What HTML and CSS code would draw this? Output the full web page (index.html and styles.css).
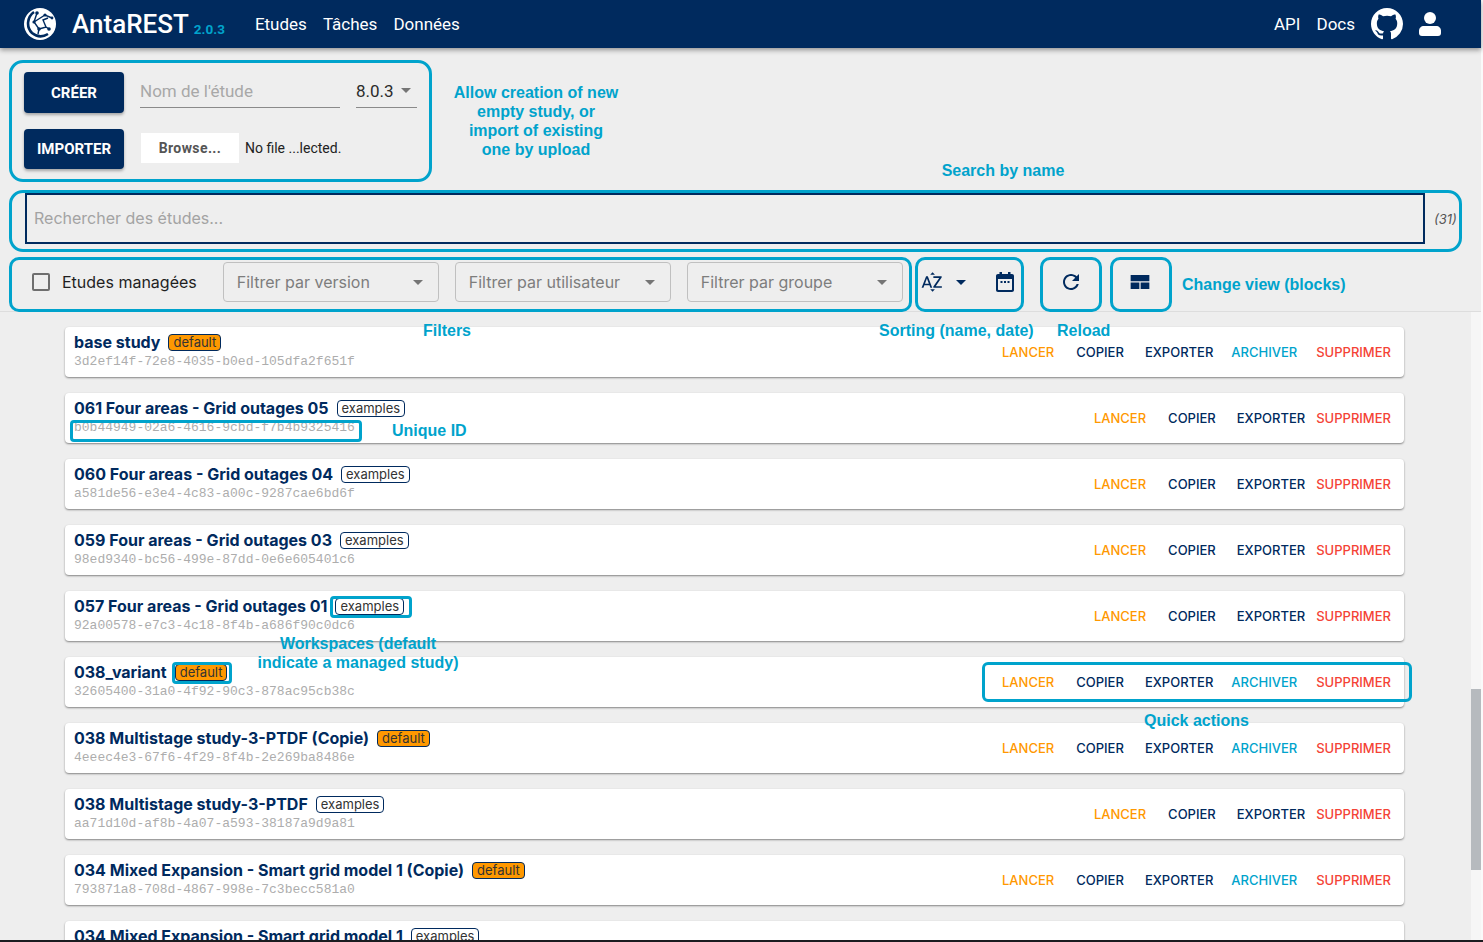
FILE: index.html
```html
<!DOCTYPE html>
<html lang="fr">
<head>
  <meta charset="UTF-8">
  <meta name="viewport" content="width=device-width, initial-scale=1.0">
  <title>AntaREST</title>
  <link rel="stylesheet" href="styles.css">
</head>
<body>
  <div class="app">
    <header class="topbar">
      <svg class="logo" viewBox="0 0 32 32">
        <circle cx="16" cy="16" r="16" fill="#fff"/>
        <g fill="none" stroke="#002a5e">
          <path d="M10 4C3 9 2 19 8 25c5 4 11 4 16 1" stroke-width="2.6"/>
          <path d="M13 5l-3 9 5 7M10 14L21 7l7 3M15 21l7-2 3 2M22 19l-3-7 5-2M15 21l-1 5" stroke-width="1.4"/>
        </g>
        <g fill="#002a5e">
          <circle cx="13" cy="5" r="1.8"/><circle cx="10" cy="14" r="1.6"/><circle cx="21" cy="7" r="1.6"/>
          <circle cx="15" cy="21" r="1.8"/><circle cx="25" cy="21" r="1.8"/><circle cx="28" cy="10" r="1.4"/>
        </g>
      </svg>
      <span class="brand">AntaREST</span>
      <span class="version">2.0.3</span>
      <nav class="nav">
        <a>Etudes</a>
        <a>Tâches</a>
        <a>Données</a>
      </nav>
      <div class="nav nav-right">
        <a>API</a>
        <a>Docs</a>
      </div>
      <svg class="github" viewBox="0 0 16 16"><path fill="#fff" d="M8 0C3.58 0 0 3.58 0 8c0 3.54 2.29 6.53 5.47 7.59.4.07.55-.17.55-.38 0-.19-.01-.82-.01-1.49-2.01.37-2.53-.49-2.69-.94-.09-.23-.48-.94-.82-1.13-.28-.15-.68-.52-.01-.53.63-.01 1.08.58 1.23.82.72 1.21 1.87.87 2.33.66.07-.52.28-.87.51-1.07-1.78-.2-3.64-.89-3.64-3.95 0-.87.31-1.59.82-2.15-.08-.2-.36-1.02.08-2.12 0 0 .67-.21 2.2.82.64-.18 1.32-.27 2-.27.68 0 1.36.09 2 .27 1.53-1.04 2.2-.82 2.2-.82.44 1.1.16 1.92.08 2.12.51.56.82 1.27.82 2.15 0 3.07-1.87 3.75-3.65 3.95.29.25.54.73.54 1.48 0 1.07-.01 1.93-.01 2.2 0 .21.15.46.55.38A8.013 8.013 0 0016 8c0-4.42-3.58-8-8-8z"/></svg>
      <svg class="user" viewBox="0 0 22 24"><circle cx="11" cy="6" r="6" fill="#fff"/><path fill="#fff" d="M5 14h12c3 0 5 2 5 5v2c0 2-1 3-3 3H3c-2 0-3-1-3-3v-2c0-3 2-5 5-5z"/></svg>
    </header>

    <section class="controls">
      <div class="create-grid">
        <button class="main-btn btn-create">CRÉER</button>
        <div class="name-row">
          <div class="name-input">Nom de l'étude</div>
          <div class="version-select">8.0.3<span class="caret"></span></div>
        </div>
        <button class="main-btn btn-import">IMPORTER</button>
        <div class="file-row">
          <span class="browse">Browse...</span>
          <span class="file-name">No file ...lected.</span>
        </div>
      </div>

      <div class="search-row">
        <div class="search">Rechercher des études...</div>
        <span class="count">(31)</span>
      </div>

      <div class="filter-row">
        <span class="checkbox"></span>
        <span class="managed">Etudes managées</span>
        <div class="select select-first">Filtrer par version<span class="caret"></span></div>
        <div class="select">Filtrer par utilisateur<span class="caret"></span></div>
        <div class="select">Filtrer par groupe<span class="caret"></span></div>
        <svg class="icon icon-az" viewBox="0 0 24 24"><path d="M14.94 4.66h-4.72l2.36-2.36zm-4.69 14.71h4.66l-2.33 2.33zM6.1 6.27 1.6 17.73h1.84l.92-2.45h5.11l.92 2.45h1.84L7.83 6.27H6.1zm-1.13 7.37 1.94-5.18 1.94 5.18H4.97zm10.76 2.5h6.12v1.59h-8.53v-1.29l5.92-8.56h-5.88v-1.6h8.3v1.26l-5.93 8.6z"/></svg>
        <span class="caret caret-dark"></span>
        <svg class="icon icon-cal" viewBox="0 0 24 24"><path d="M6.500 2H9v2h6V2h2.500v2H19c1.200 0 2 .800 2 2v14c0 1.200-.800 2-2 2H5c-1.200 0-2-.800-2-2V6c0-1.200.800-2 2-2h1.500V2zM5 9v10.500c0 .300.200.500.500.500h13c.300 0 .500-.200.500-.500V9H5z"/><rect x="7.500" y="11" width="2" height="2"/><rect x="11" y="11" width="2" height="2"/><rect x="14.500" y="11" width="2" height="2"/></svg>
        <svg class="icon icon-refresh" viewBox="0 0 24 24"><path d="M17.65 6.35C16.2 4.9 14.21 4 12 4c-4.42 0-7.99 3.58-7.99 8s3.57 8 7.99 8c3.73 0 6.84-2.55 7.73-6h-2.08c-.82 2.33-3.04 4-5.65 4-3.31 0-6-2.69-6-6s2.69-6 6-6c1.66 0 3.14.69 4.22 1.78L13 11h7V4l-2.35 2.35z"/></svg>
        <svg class="icon icon-view" viewBox="0 0 24 24"><path d="M2.650 5h18.700v6.200H2.650zM2.650 12.400h8.700V19h-8.700zM12.650 12.400h8.700V19h-8.700z"/></svg>
      </div>
    </section>

    <div class="list-area">
      <main class="list">
        <article class="card">
          <div class="card-info">
            <div class="card-title"><span class="card-name">base study</span><span class="tag tag-default">default</span></div>
            <div class="card-id">3d2ef14f-72e8-4035-b0ed-105dfa2f651f</div>
          </div>
          <div class="actions">
            <a class="lancer">LANCER</a><a class="copier">COPIER</a><a class="exporter">EXPORTER</a><a class="archiver">ARCHIVER</a><a class="supprimer">SUPPRIMER</a>
          </div>
        </article>
        <article class="card">
          <div class="card-info">
            <div class="card-title"><span class="card-name">061 Four areas - Grid outages 05</span><span class="tag">examples</span></div>
            <div class="card-id">b0b44949-02a6-4616-9cbd-f7b4b9325416</div>
          </div>
          <div class="actions">
            <a class="lancer">LANCER</a><a class="copier">COPIER</a><a class="exporter">EXPORTER</a><a class="supprimer">SUPPRIMER</a>
          </div>
        </article>
        <article class="card">
          <div class="card-info">
            <div class="card-title"><span class="card-name">060 Four areas - Grid outages 04</span><span class="tag">examples</span></div>
            <div class="card-id">a581de56-e3e4-4c83-a00c-9287cae6bd6f</div>
          </div>
          <div class="actions">
            <a class="lancer">LANCER</a><a class="copier">COPIER</a><a class="exporter">EXPORTER</a><a class="supprimer">SUPPRIMER</a>
          </div>
        </article>
        <article class="card">
          <div class="card-info">
            <div class="card-title"><span class="card-name">059 Four areas - Grid outages 03</span><span class="tag">examples</span></div>
            <div class="card-id">98ed9340-bc56-499e-87dd-0e6e605401c6</div>
          </div>
          <div class="actions">
            <a class="lancer">LANCER</a><a class="copier">COPIER</a><a class="exporter">EXPORTER</a><a class="supprimer">SUPPRIMER</a>
          </div>
        </article>
        <article class="card">
          <div class="card-info">
            <div class="card-title"><span class="card-name">057 Four areas - Grid outages 01</span><span class="tag">examples</span></div>
            <div class="card-id">92a00578-e7c3-4c18-8f4b-a686f90c0dc6</div>
          </div>
          <div class="actions">
            <a class="lancer">LANCER</a><a class="copier">COPIER</a><a class="exporter">EXPORTER</a><a class="supprimer">SUPPRIMER</a>
          </div>
        </article>
        <article class="card">
          <div class="card-info">
            <div class="card-title"><span class="card-name">038_variant</span><span class="tag tag-default">default</span></div>
            <div class="card-id">32605400-31a0-4f92-90c3-878ac95cb38c</div>
          </div>
          <div class="actions">
            <a class="lancer">LANCER</a><a class="copier">COPIER</a><a class="exporter">EXPORTER</a><a class="archiver">ARCHIVER</a><a class="supprimer">SUPPRIMER</a>
          </div>
        </article>
        <article class="card">
          <div class="card-info">
            <div class="card-title"><span class="card-name">038 Multistage study-3-PTDF (Copie)</span><span class="tag tag-default">default</span></div>
            <div class="card-id">4eeec4e3-67f6-4f29-8f4b-2e269ba8486e</div>
          </div>
          <div class="actions">
            <a class="lancer">LANCER</a><a class="copier">COPIER</a><a class="exporter">EXPORTER</a><a class="archiver">ARCHIVER</a><a class="supprimer">SUPPRIMER</a>
          </div>
        </article>
        <article class="card">
          <div class="card-info">
            <div class="card-title"><span class="card-name">038 Multistage study-3-PTDF</span><span class="tag">examples</span></div>
            <div class="card-id">aa71d10d-af8b-4a07-a593-38187a9d9a81</div>
          </div>
          <div class="actions">
            <a class="lancer">LANCER</a><a class="copier">COPIER</a><a class="exporter">EXPORTER</a><a class="supprimer">SUPPRIMER</a>
          </div>
        </article>
        <article class="card">
          <div class="card-info">
            <div class="card-title"><span class="card-name">034 Mixed Expansion - Smart grid model 1 (Copie)</span><span class="tag tag-default">default</span></div>
            <div class="card-id">793871a8-708d-4867-998e-7c3becc581a0</div>
          </div>
          <div class="actions">
            <a class="lancer">LANCER</a><a class="copier">COPIER</a><a class="exporter">EXPORTER</a><a class="archiver">ARCHIVER</a><a class="supprimer">SUPPRIMER</a>
          </div>
        </article>
        <article class="card">
          <div class="card-info">
            <div class="card-title"><span class="card-name">034 Mixed Expansion - Smart grid model 1</span><span class="tag">examples</span></div>
          </div>
        </article>
      </main>
      <div class="scrollbar"><div class="thumb"></div></div>
    </div>
  </div>
  <div class="bottom-edge"></div>

  <!-- annotations drawn over the screenshot -->
  <div class="mark mark-create"></div>
  <div class="mark mark-search"></div>
  <div class="mark mark-filters"></div>
  <div class="mark mark-sort"></div>
  <div class="mark mark-reload"></div>
  <div class="mark mark-view"></div>
  <div class="mark mark-id"></div>
  <div class="mark mark-workspace"></div>
  <div class="mark mark-default"></div>
  <div class="mark mark-quick"></div>

  <div class="note note-allow">Allow creation of new<br>empty study, or<br>import of existing<br>one by upload</div>
  <div class="note note-search">Search by name</div>
  <div class="note note-change">Change view (blocks)</div>
  <div class="note note-filters">Filters</div>
  <div class="note note-sorting">Sorting (name, date)</div>
  <div class="note note-reload">Reload</div>
  <div class="note note-unique">Unique ID</div>
  <div class="note note-workspaces">Workspaces (default<br>indicate a managed study)</div>
  <div class="note note-quick">Quick actions</div>
</body>
</html>
```

FILE: styles.css
```css
* {
  box-sizing: border-box;
}
html, body {
  height: 100%;
}
body {
  margin: 0;
  position: relative;
  overflow: hidden;
  background-color: #fafafa;
  font-family: "Inter", sans-serif;
  color: #002a5e;
}
.app {
  width: 1481px;
  height: 940px;
  display: flex;
  flex-direction: column;
  background-color: #eeeeee;
}
.bottom-edge {
  height: 2px;
  background-color: #1b1b1f;
}

/* top bar */
.topbar {
  height: 48px;
  flex: none;
  display: flex;
  align-items: center;
  padding-left: 24px;
  background-color: #002a5e;
  box-shadow: 0 2px 5px rgba(0, 0, 0, 0.4);
  position: relative;
  color: #fff;
  font-family: "Roboto", sans-serif;
}
.logo {
  width: 32px;
  height: 32px;
}
.brand {
  margin-left: 16px;
  font-size: 26px;
  font-weight: 500;
}
.version {
  margin-left: 5px;
  margin-top: 9px;
  font-size: 13.5px;
  font-weight: 700;
  color: #00a3cc;
}
.nav {
  display: flex;
  gap: 16px;
  margin-left: 30px;
  font-size: 17px;
}
.nav-right {
  margin-left: auto;
}
.github {
  width: 32px;
  height: 32px;
  margin-left: 16px;
}
.user {
  width: 22px;
  height: 24px;
  margin: 0 40px 0 16px;
}

/* create, search and filter */
.controls {
  flex: none;
  height: 264px;
  padding: 24px 0 0 24px;
  border-bottom: 1px solid #dddddd;
}
.create-grid {
  display: grid;
  grid-template-columns: 100px 277px;
  grid-template-rows: 41px 40px;
  column-gap: 16px;
  row-gap: 16px;
}
.main-btn {
  border: none;
  border-radius: 4px;
  background-color: #002a5e;
  color: #fff;
  font-family: "Roboto", sans-serif;
  font-size: 15px;
  font-weight: 700;
  box-shadow: 0 2px 3px rgba(0, 0, 0, 0.3);
}
.name-row {
  display: flex;
  gap: 16px;
}
.name-input {
  width: 200px;
  height: 36px;
  line-height: 38px;
  border-bottom: 1px solid #8a8a8a;
  color: #a8a8a8;
  font-family: "Roboto", sans-serif;
  font-size: 17px;
}
.version-select {
  width: 61px;
  height: 36px;
  padding: 2px 6px 0 0;
  border-bottom: 1px solid #8a8a8a;
  color: #2b2b2b;
  font-family: "Roboto", sans-serif;
  font-size: 17px;
  display: flex;
  align-items: center;
  justify-content: space-between;
}
.caret {
  width: 0;
  height: 0;
  border-left: 5px solid transparent;
  border-right: 5px solid transparent;
  border-top: 5px solid #757575;
}
.file-row {
  display: flex;
  align-items: center;
  padding: 0 0 2px 1px;
  font-family: "Roboto", sans-serif;
}
.browse {
  width: 98px;
  height: 30px;
  line-height: 30px;
  text-align: center;
  background-color: #fff;
  color: #555555;
  font-size: 14px;
  font-weight: 700;
  letter-spacing: 0.4px;
}
.file-name {
  margin-left: 6px;
  font-size: 14px;
  color: #222222;
}
.search-row {
  display: flex;
  align-items: center;
  margin-top: 24px;
  height: 51px;
}
.search {
  width: 1400px;
  margin-left: 1px;
  height: 51px;
  line-height: 47px;
  padding-left: 7px;
  border: 2px solid #002a5e;
  color: #a3a3a3;
  font-size: 16px;
}
.count {
  margin-left: 9px;
  font-size: 13px;
  font-style: italic;
  color: #555555;
}
.filter-row {
  display: flex;
  align-items: center;
  margin-top: 18px;
  height: 40px;
  padding-left: 8px;
}
.checkbox {
  width: 18px;
  height: 18px;
  border: 2px solid #6e6e6e;
  border-radius: 2px;
}
.managed {
  margin-left: 12px;
  font-size: 16px;
  color: #1f1f1f;
}
.select {
  width: 216px;
  height: 40px;
  margin-left: 16px;
  padding: 0 15px 0 13px;
  display: flex;
  align-items: center;
  justify-content: space-between;
  border: 1px solid #c0c0c0;
  border-radius: 4px;
  color: #7d7d7d;
  font-size: 16px;
}
.select-first {
  margin-left: 26px;
}
.icon {
  width: 24px;
  height: 24px;
  fill: #002a5e;
  flex: none;
}
.icon-az {
  margin-left: 17px;
}
.caret-dark {
  margin-left: 12px;
  border-top-color: #002a5e;
}
.icon-cal {
  margin-left: 27px;
}
.icon-refresh {
  margin-left: 42px;
}
.icon-view {
  margin-left: 45px;
}

/* study list */
.list-area {
  flex: 1;
  min-height: 0;
  display: flex;
  overflow: hidden;
}
.list {
  flex: 1;
  padding: 15px 67px 0 65px;
  display: flex;
  flex-direction: column;
  gap: 16px;
}
.card {
  flex: none;
  height: 50px;
  padding: 0 13px 0 9px;
  display: flex;
  justify-content: space-between;
  align-items: center;
  background-color: #fff;
  border-radius: 4px;
  box-shadow: 0 1px 2px rgba(0, 0, 0, 0.45);
}
.card-info {
  align-self: flex-start;
  padding-top: 6px;
}
.card-title {
  display: flex;
  align-items: center;
  gap: 8px;
  height: 19px;
  font-size: 16px;
  font-weight: 700;
}
.card-name {
  padding-bottom: 2px;
}
.tag {
  height: 17px;
  line-height: 15px;
  padding: 0 4px;
  border: 1px solid #002a5e;
  border-radius: 4px;
  font-size: 13px;
  font-weight: 400;
  color: #333333;
}
.tag-default {
  background-color: #ff9800;
}
.card-id {
  margin-top: 2px;
  height: 16px;
  line-height: 16px;
  font-family: "Liberation Mono", monospace;
  font-size: 13px;
  color: #adadad;
}
.actions {
  display: flex;
  font-size: 13px;
  font-weight: 500;
}
.lancer {
  margin-right: 22px;
  color: #ff9800;
}
.copier {
  margin-right: 21px;
}
.exporter {
  margin-right: 11px;
}
.archiver {
  margin: 0 19px 0 7px;
  color: #00a3cc;
}
.supprimer {
  color: #f44336;
}
.scrollbar {
  width: 10px;
  flex: none;
  background-color: #f6f6f6;
}
.thumb {
  height: 181px;
  margin-top: 377px;
  background-color: #b6babe;
}

/* annotation frames and labels */
.mark {
  position: absolute;
  border: 3px solid #00a3cc;
  border-radius: 14px;
}
.mark-create { left: 9px; top: 60px; width: 423px; height: 122px; }
.mark-search { left: 9px; top: 190px; width: 1453px; height: 62px; }
.mark-filters { left: 9px; top: 257px; width: 903px; height: 55px; border-radius: 10px; }
.mark-sort { left: 915px; top: 257px; width: 109px; height: 55px; border-radius: 10px; }
.mark-reload { left: 1040px; top: 257px; width: 62px; height: 55px; border-radius: 10px; }
.mark-view { left: 1110px; top: 257px; width: 62px; height: 55px; border-radius: 10px; }
.mark-id { left: 70px; top: 420px; width: 292px; height: 22px; border-radius: 4px; }
.mark-workspace { left: 330px; top: 596px; width: 82px; height: 22px; border-radius: 4px; }
.mark-default { left: 172px; top: 662px; width: 60px; height: 22px; border-radius: 4px; }
.mark-quick { left: 982px; top: 662px; width: 430px; height: 40px; border-radius: 6px; }

.note {
  position: absolute;
  font-family: "Liberation Sans", sans-serif;
  font-size: 16px;
  font-weight: 700;
  line-height: 19px;
  color: #00a3cc;
  text-align: center;
  white-space: nowrap;
}
.note-allow { left: 436px; top: 83px; width: 200px; }
.note-search { left: 903px; top: 161px; width: 200px; }
.note-change { left: 1182px; top: 275px; }
.note-filters { left: 423px; top: 321px; }
.note-sorting { left: 879px; top: 321px; }
.note-reload { left: 1057px; top: 321px; }
.note-unique { left: 392px; top: 421px; }
.note-workspaces { left: 208px; top: 634px; width: 300px; }
.note-quick { left: 1144px; top: 711px; }
```
